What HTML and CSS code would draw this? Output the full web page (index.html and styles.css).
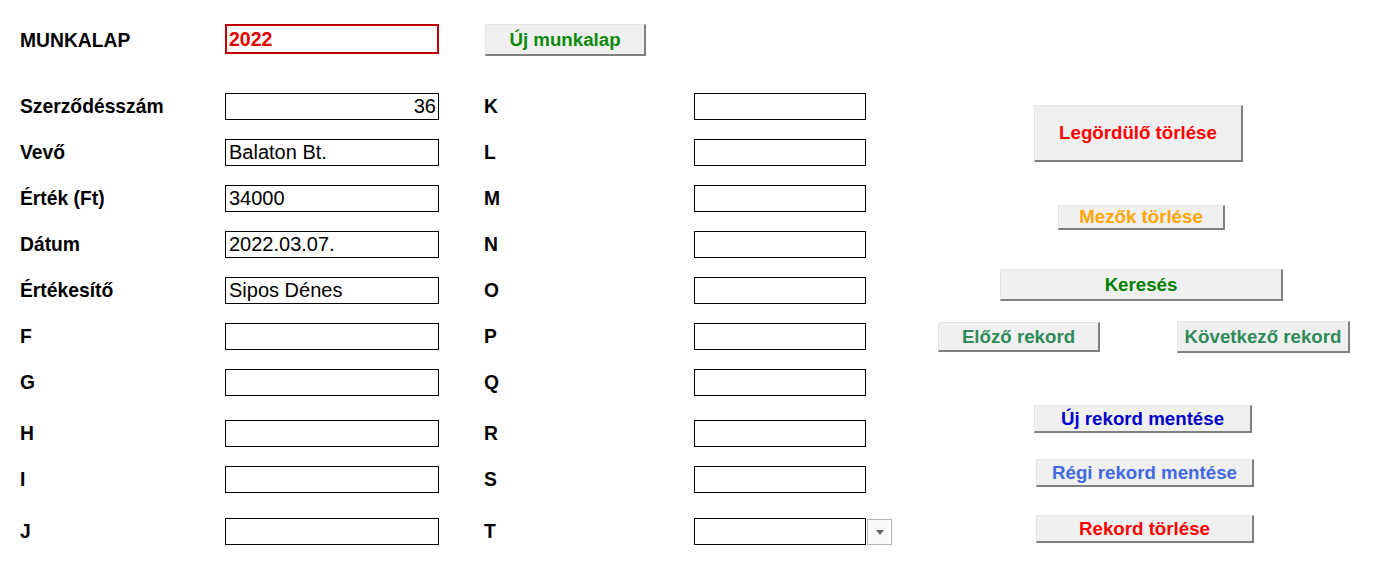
FILE: index.html
```html
<!DOCTYPE html>
<html lang="hu">
<head>
<meta charset="utf-8">
<title>Munkalap</title>
<link rel="stylesheet" href="styles.css">
</head>
<body>
<div class="sheet">
  <div class="form">
    <div class="head">
      <div class="label">MUNKALAP</div>
      <div class="year">2022</div>
      <div class="btn btn-new">Új munkalap</div>
    </div>

    <div class="row first">
      <div class="label">Szerződésszám</div>
      <div class="box right">36</div>
      <div></div>
      <div class="label">K</div>
      <div class="box"></div>
    </div>
    <div class="row">
      <div class="label">Vevő</div>
      <div class="box">Balaton Bt.</div>
      <div></div>
      <div class="label">L</div>
      <div class="box"></div>
    </div>
    <div class="row">
      <div class="label">Érték (Ft)</div>
      <div class="box">34000</div>
      <div></div>
      <div class="label">M</div>
      <div class="box"></div>
    </div>
    <div class="row">
      <div class="label">Dátum</div>
      <div class="box">2022.03.07.</div>
      <div></div>
      <div class="label">N</div>
      <div class="box"></div>
    </div>
    <div class="row">
      <div class="label">Értékesítő</div>
      <div class="box">Sipos Dénes</div>
      <div></div>
      <div class="label">O</div>
      <div class="box"></div>
    </div>
    <div class="row">
      <div class="label">F</div>
      <div class="box"></div>
      <div></div>
      <div class="label">P</div>
      <div class="box"></div>
    </div>
    <div class="row">
      <div class="label">G</div>
      <div class="box"></div>
      <div></div>
      <div class="label">Q</div>
      <div class="box"></div>
    </div>
    <div class="row wide">
      <div class="label">H</div>
      <div class="box"></div>
      <div></div>
      <div class="label">R</div>
      <div class="box"></div>
    </div>
    <div class="row">
      <div class="label">I</div>
      <div class="box"></div>
      <div></div>
      <div class="label">S</div>
      <div class="box"></div>
    </div>
    <div class="row wider">
      <div class="label">J</div>
      <div class="box"></div>
      <div></div>
      <div class="label">T</div>
      <div class="box"></div>
      <div class="drop"><span class="tri"></span></div>
    </div>
  </div>

  <div class="panel">
    <div class="btn b-leg">Legördülő törlése</div>
    <div class="btn b-mez">Mezők törlése</div>
    <div class="btn b-ker">Keresés</div>
    <div class="nav">
      <div class="btn b-prev">Előző rekord</div>
      <div class="btn b-next">Következő rekord</div>
    </div>
    <div class="btn b-uj">Új rekord mentése</div>
    <div class="btn b-regi">Régi rekord mentése</div>
    <div class="btn b-del">Rekord törlése</div>
  </div>
</div>
</body>
</html>
```

FILE: styles.css
```css
html, body {
  margin: 0;
  padding: 0;
  background: #ffffff;
}

body {
  font-family: "Liberation Sans", Arial, sans-serif;
  color: #000000;
}

.sheet {
  display: flex;
  width: 1375px;
  height: 574px;
  overflow: hidden;
}

.form {
  width: 938px;
  flex: none;
  padding-left: 20px;
  padding-top: 24px;
  box-sizing: border-box;
}

.label {
  font-weight: bold;
  font-size: 19.3px;
  white-space: nowrap;
}

.head {
  display: grid;
  grid-template-columns: 205px 214px 46px 161px;
  align-items: center;
  height: 32px;
}

.head .label {
  padding-top: 1px;
}

.year {
  height: 30px;
  box-sizing: border-box;
  border: 2px solid #c00000;
  color: #e00000;
  font-weight: bold;
  font-size: 19.5px;
  padding-left: 2px;
  line-height: 26px;
  align-self: start;
}

.btn-new {
  grid-column: 4;
  height: 32px;
  color: #0a8a0a;
}

.row {
  display: grid;
  grid-template-columns: 205px 214px 45px 210px 172px 25px;
  align-items: center;
  height: 27px;
  margin-top: 19px;
}

.row.first {
  margin-top: 37px;
}

.row.wide {
  margin-top: 24px;
}

.row.wider {
  margin-top: 25px;
}

.box {
  height: 27px;
  box-sizing: border-box;
  border: 1px solid #000000;
  padding: 0 3px;
  font-size: 20px;
  line-height: 25px;
  white-space: nowrap;
  overflow: hidden;
}

.box.right {
  text-align: right;
  padding-right: 2px;
}

.drop {
  height: 26px;
  width: 25px;
  box-sizing: border-box;
  border: 1px solid #b4b4b4;
  background: #fafafa;
  display: flex;
  align-items: center;
  justify-content: center;
  margin-left: 1px;
}

.tri {
  width: 0;
  height: 0;
  border-left: 4px solid transparent;
  border-right: 4px solid transparent;
  border-top: 5px solid #666666;
  margin-top: 2px;
}

/* buttons */
.btn {
  box-sizing: border-box;
  background: #f0f0f0;
  border-top: 1px solid #e4e4e4;
  border-left: 1px solid #e4e4e4;
  border-right: 2px solid #808080;
  border-bottom: 2px solid #808080;
  display: flex;
  align-items: center;
  justify-content: center;
  font-weight: bold;
  font-size: 18.7px;
  white-space: nowrap;
}

.panel {
  display: flex;
  flex-direction: column;
  align-items: flex-start;
}

.b-leg {
  margin-top: 105px;
  margin-left: 96px;
  width: 209px;
  height: 57px;
  color: #ff0000;
}

.b-mez {
  margin-top: 43px;
  margin-left: 120px;
  width: 167px;
  height: 25px;
  color: #ffa500;
}

.b-ker {
  margin-top: 39px;
  margin-left: 62px;
  width: 283px;
  height: 32px;
  color: #008000;
}

.nav {
  margin-top: 20px;
  display: flex;
  align-items: center;
  gap: 77px;
  height: 32px;
}

.b-prev {
  width: 162px;
  height: 30px;
  color: #2e8b57;
}

.b-next {
  width: 173px;
  height: 32px;
  color: #2e8b57;
}

.b-uj {
  margin-top: 52px;
  margin-left: 96px;
  width: 218px;
  height: 28px;
  color: #0000cd;
}

.b-regi {
  margin-top: 26px;
  margin-left: 98px;
  width: 218px;
  height: 28px;
  color: #4169e1;
}

.b-del {
  margin-top: 28px;
  margin-left: 98px;
  width: 218px;
  height: 28px;
  color: #ff0000;
}
```
